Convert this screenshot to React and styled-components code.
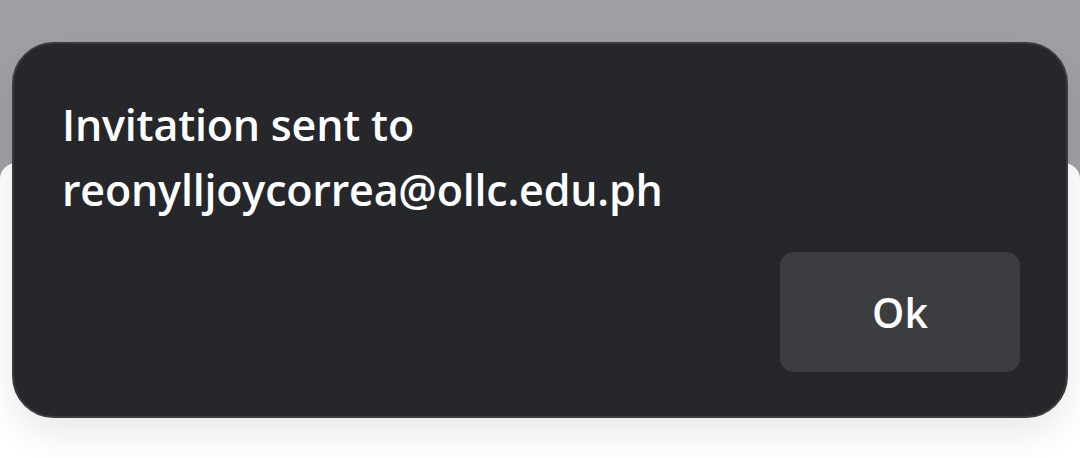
import React from 'react';
import styled, { createGlobalStyle } from 'styled-components';

const GlobalStyle = createGlobalStyle`
  html, body {
    margin: 0;
    padding: 0;
    background: #9fa0a4;
  }
  body {
    font-family: "Open Sans", "Noto Sans", sans-serif;
  }
`;

const Screen = styled.div`
  position: relative;
  width: 1080px;
  height: 458px;
  overflow: hidden;
  background: #9fa0a4;
  display: flex;
  flex-direction: column;
`;

const Backdrop = styled.div`
  height: 163px;
  flex: none;
`;

const Sheet = styled.div`
  flex: 1;
  background: #ffffff;
  border-radius: 16px 16px 0 0;
`;

const Dialog = styled.div`
  position: absolute;
  left: 12px;
  top: 42px;
  width: 1056px;
  height: 376px;
  box-sizing: border-box;
  background: #26272b;
  border: 2px solid #3a3b3f;
  border-radius: 42px;
  box-shadow: 0 16px 36px rgba(0, 0, 0, 0.09);
  padding: 48px 46px 44px 48px;
  display: flex;
  flex-direction: column;
  justify-content: space-between;
`;

const Message = styled.p`
  margin: 0;
  color: #ffffff;
  font-size: 43px;
  font-weight: 600;
  line-height: 65px;
  letter-spacing: -0.2px;
`;

const Actions = styled.div`
  display: flex;
  justify-content: flex-end;
`;

const OkButton = styled.button`
  width: 240px;
  height: 120px;
  border: none;
  border-radius: 14px;
  background: #3c3d41;
  color: #ffffff;
  font-family: inherit;
  font-size: 41px;
  font-weight: 600;
  cursor: pointer;
`;

export default function App() {
  return (
    <>
      <GlobalStyle />
      <Screen>
        <Backdrop />
        <Sheet />
        <Dialog role="dialog">
          <Message>
            Invitation sent to
            <br />
            reonylljoycorrea@ollc.edu.ph
          </Message>
          <Actions>
            <OkButton>Ok</OkButton>
          </Actions>
        </Dialog>
      </Screen>
    </>
  );
}
